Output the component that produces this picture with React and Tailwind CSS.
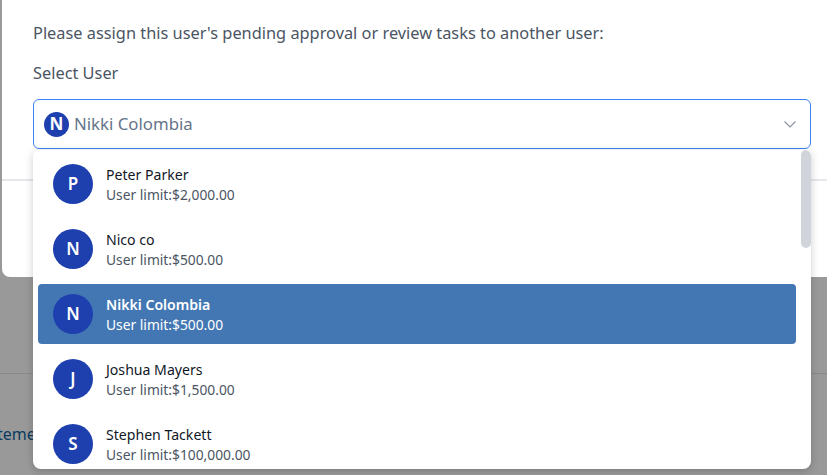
import React from "react";

const users = [
  { i: "P", n: "Peter Parker", l: "$2,000.00" },
  { i: "N", n: "Nico co", l: "$500.00" },
  { i: "N", n: "Nikki Colombia", l: "$500.00", s: true },
  { i: "J", n: "Joshua Mayers", l: "$1,500.00" },
  { i: "S", n: "Stephen Tackett", l: "$100,000.00" },
];

export default function App() {
  return (
    <div className="relative w-[827px] h-[475px] overflow-hidden bg-[#999999] font-['Noto_Sans','Open_Sans',sans-serif]">
      <div className="ml-[2px] h-[277px] bg-white rounded-bl-lg flex flex-col">
        <div className="h-[181px] border-b-2 border-[#e5e7eb] pl-[31px] pr-4 shrink-0">
          <p className="pt-[21px] text-[16.35px] leading-6 text-[#4b5563]">Please assign this user's pending approval or review tasks to another user:</p>
          <p className="mt-[16px] text-[16.35px] leading-6 text-[#4b5563]">Select User</p>
          <div className="mt-[14px] w-[778px] h-[50px] bg-white border border-[#3b82f6] rounded-md flex items-center pl-[10px] pr-[12px]">
            <span className="w-[25px] h-[25px] rounded-full bg-[#1e40af] text-white font-bold text-[17px] flex items-center justify-center">N</span>
            <span className="ml-[5px] text-[#64748b] text-[16.8px] flex-1">Nikki Colombia</span>
            <svg className="w-[16px] h-[16px] text-[#8b93a1]" viewBox="0 0 16 16" fill="none" stroke="currentColor" strokeWidth="1.2">
              <path d="M2.5 5.5 8 11l5.5-5.5" />
            </svg>
          </div>
        </div>
      </div>
      <div className="mt-[96px] h-[1px] bg-[#8a8a8a]" />
      <div className="mt-[50px] -ml-[3px] text-base leading-5 text-[#0b3b60]">teme</div>

      <div className="absolute left-[33px] top-[150px] w-[778px] h-[319px] bg-white rounded-b-lg rounded-t-md shadow-[0_2px_8px_rgba(0,0,0,0.2)] overflow-hidden">
        <div className="pl-[5px] pr-[15px] pt-[4px] flex flex-col gap-[5px]">
          {users.map((u) => (
            <div key={u.n} className={`h-[60px] shrink-0 rounded flex items-center pl-[15px] ${u.s ? "bg-[#4377b3]" : ""}`}>
              <span className="w-[40px] h-[40px] rounded-full bg-[#1e40af] text-white font-semibold text-[17px] flex items-center justify-center">{u.i}</span>
              <div className="ml-[13px] text-[13.8px] leading-5 pt-[2px]">
                <div className={`text-[14.1px] ${u.s ? "text-white font-semibold" : "text-[#111827]"}`}>{u.n}</div>
                <div className={u.s ? "text-white" : "text-[#4b5563]"}>User limit:{u.l}</div>
              </div>
            </div>
          ))}
        </div>
        <div className="absolute right-0 top-0 w-[10px] h-[98px] rounded-full bg-[#d1d5db]" />
      </div>
    </div>
  );
}
